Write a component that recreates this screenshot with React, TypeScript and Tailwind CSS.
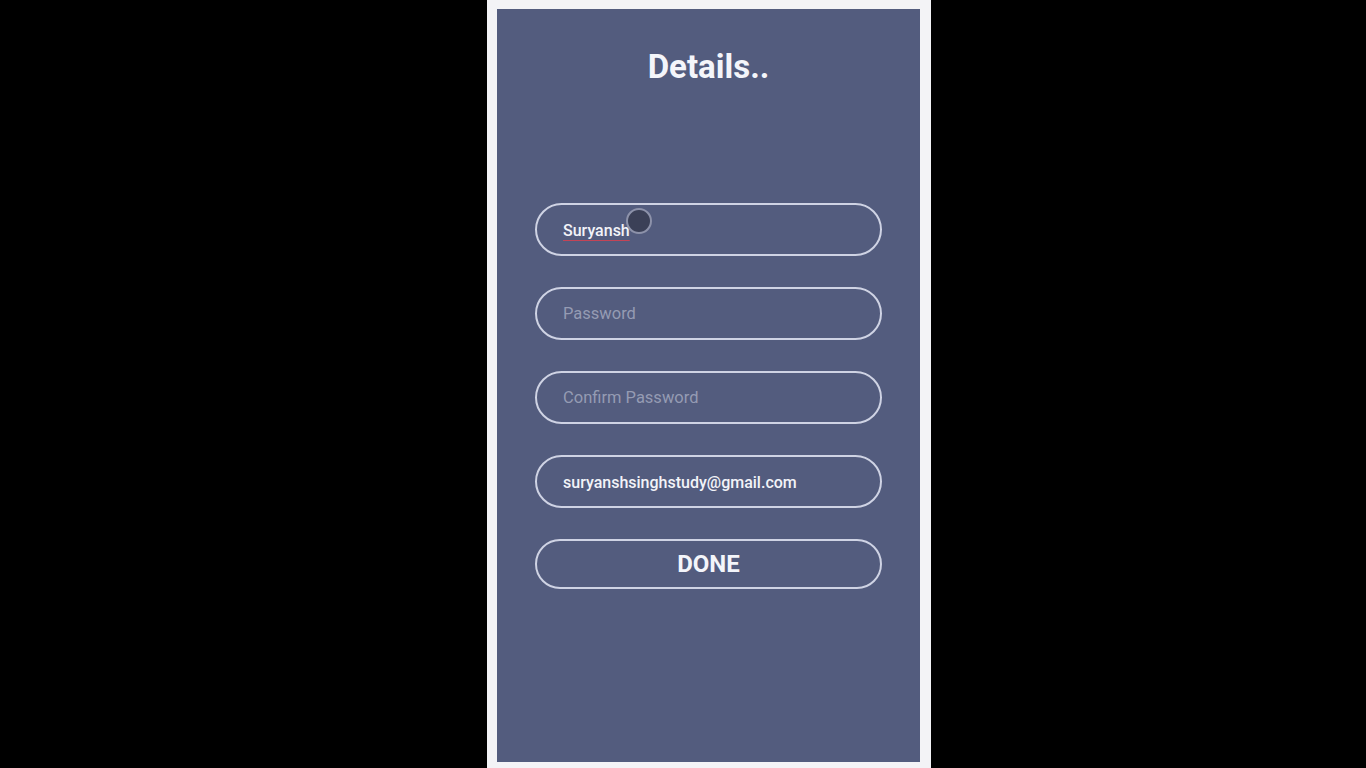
import React from "react";

export default function App() {
  const font = { fontFamily: "Roboto, 'Noto Sans', sans-serif" };
  return (
    <div className="w-full h-[768px] bg-black flex overflow-hidden" style={font}>
      <div className="ml-[487px] w-[444px] h-[768px] bg-[#f3f3f6] pt-[9px] pl-[10px] pr-[11px]">
        <div className="relative h-[753px] bg-[#535c7e] flex flex-col items-center pt-[39px]">
          <h1 className="text-[33px] leading-[38px] font-bold text-[#f4f5fa]">Details..</h1>
          <div className="mt-[117px] w-[347px] flex flex-col gap-[31px]">
            <div className="relative h-[53px] rounded-full border-2 border-[#cfd3e4] flex items-center px-[26px] pt-[2px]">
              <span className="text-[16px] font-medium text-[#f2f3f8] underline decoration-[#c44456] decoration-1 underline-offset-[4px]">Suryansh</span>
              <span className="absolute left-[89px] top-[3px] w-[26px] h-[26px] rounded-full bg-[#3b4057] border-2 border-[#8d92aa]" />
            </div>
            <div className="h-[53px] rounded-full border-2 border-[#cfd3e4] flex items-center px-[26px] pt-[2px]">
              <span className="text-[16.5px] text-[#959bb3]">Password</span>
            </div>
            <div className="h-[53px] rounded-full border-2 border-[#cfd3e4] flex items-center px-[26px] pt-[2px]">
              <span className="text-[16.5px] text-[#959bb3]">Confirm Password</span>
            </div>
            <div className="h-[53px] rounded-full border-2 border-[#cfd3e4] flex items-center px-[26px] pt-[2px]">
              <span className="text-[16px] font-medium text-[#f2f3f8]">suryanshsinghstudy@gmail.com</span>
            </div>
            <div className="h-[50px] rounded-full border-2 border-[#cfd3e4] flex items-center justify-center">
              <span className="text-[24px] font-bold text-[#f4f5fa]">DONE</span>
            </div>
          </div>
        </div>
      </div>
    </div>
  );
}
